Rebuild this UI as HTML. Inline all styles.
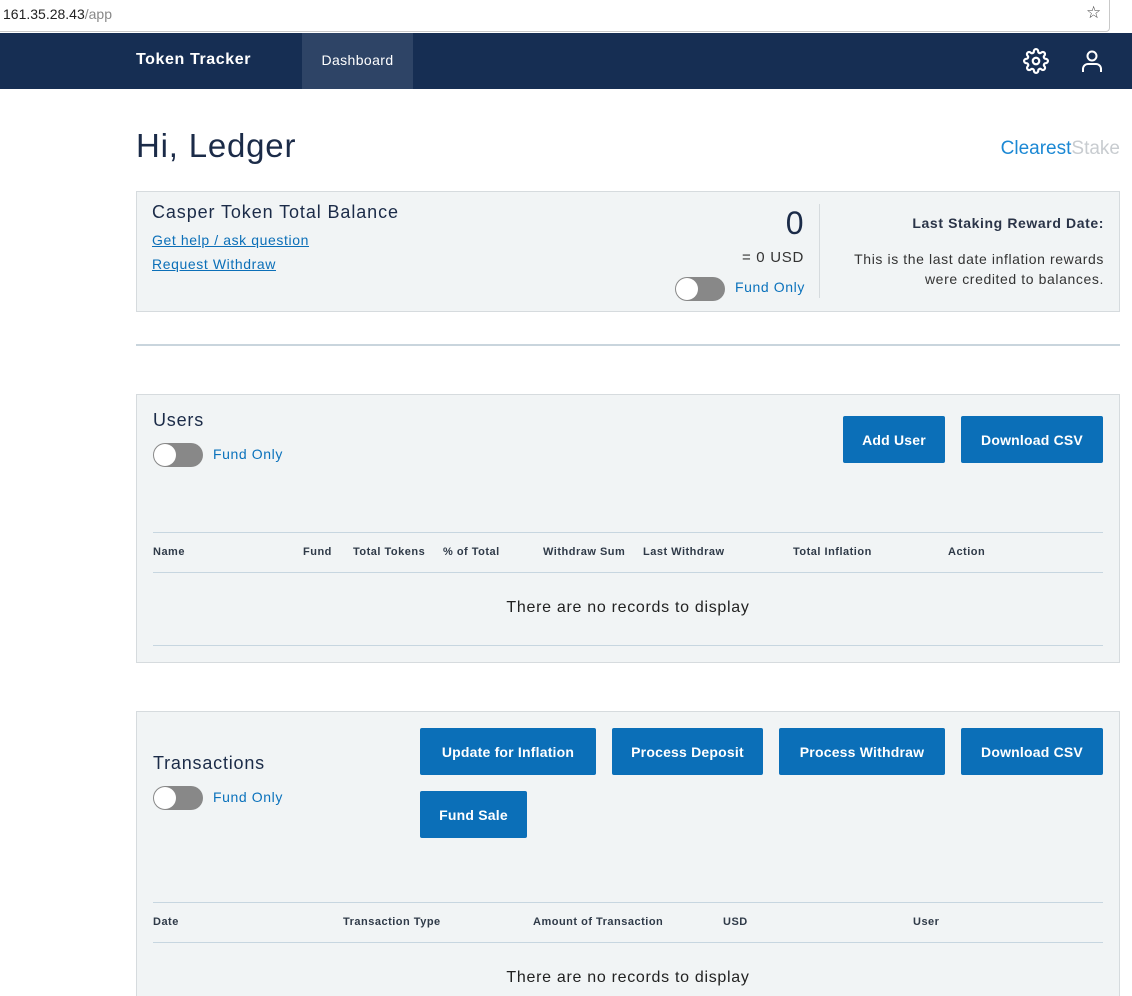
<!DOCTYPE html>
<html><head><meta charset="utf-8"><style>
*{box-sizing:border-box;margin:0;padding:0}
html,body{width:1132px;height:996px;overflow:hidden}
body{background:#fff;font-family:"Liberation Sans",sans-serif;color:#1b2b48;position:relative;letter-spacing:0.4px}
.a{position:absolute;white-space:nowrap}
.bar{left:-5px;top:-5px;width:1115px;height:37px;background:#fff;border:1px solid #c9c9c9;border-radius:4px}
.nav{left:0;top:33px;width:1132px;height:56px;background:#162e53}
.card{background:#f1f4f5;border:1px solid #d6dbde}
.btn{background:#0b6fb8;color:#fff;font-weight:bold;font-size:14px;display:flex;align-items:center;justify-content:center;border-radius:2px;letter-spacing:0.2px}
.lnk{color:#0b6fb8;font-size:14px;text-decoration:underline;letter-spacing:0.6px}
.tog{width:50px;height:24px;border-radius:12px;background:#888}
.tog:after{content:"";position:absolute;left:1px;top:1px;width:22px;height:22px;border-radius:50%;background:#fff}
.fo{color:#0b72bc;font-size:14px;letter-spacing:0.6px}
.th{font-size:11px;font-weight:bold;color:#2f3a48;letter-spacing:0.5px}
.hl{height:1px;background:#c7d6e0}
.nr{font-size:16px;color:#222;width:950px;text-align:center;letter-spacing:0.7px}
</style></head><body>
<div class="a bar"></div>
<div class="a" style="left:3px;top:6px;font-size:14px;color:#222;letter-spacing:0">161.35.28.43<span style="color:#888">/app</span></div>
<div class="a" style="left:1086px;top:3px;font-size:17px;color:#444">☆</div>
<div class="a nav"></div>
<div class="a" style="left:136px;top:51px;color:#fff;font-weight:bold;font-size:16px;letter-spacing:0.6px">Token Tracker</div>
<div class="a" style="left:302px;top:33px;width:111px;height:56px;background:#2e4466;color:#fff;font-size:14px;text-align:center;line-height:54px">Dashboard</div>
<svg class="a" style="left:1023px;top:48px" width="26" height="26" viewBox="0 0 24 24" fill="none" stroke="#fff" stroke-width="2"><circle cx="12" cy="12" r="3"/><path d="M19.4 15a1.65 1.65 0 0 0 .33 1.82l.06.06a2 2 0 1 1-2.830 2.83l-.06-.06a1.65 1.65 0 0 0-1.82-.33 1.65 1.65 0 0 0-1 1.51V21a2 2 0 1 1-4 0v-.09A1.65 1.65 0 0 0 9 19.4a1.65 1.65 0 0 0-1.82.33l-.06.06a2 2 0 1 1-2.83-2.830l.06-.06A1.65 1.65 0 0 0 4.68 15a1.65 1.65 0 0 0-1.51-1H3a2 2 0 1 1 0-4h.09A1.65 1.650 0 0 0 4.6 9a1.65 1.65 0 0 0-.33-1.82l-.06-.06a2 2 0 1 1 2.83-2.83l.06.06A1.65 1.65 0 0 0 9 4.68 1.65 1.65 0 0 0 10 3.17V3a2 2 0 1 1 4 0v.09a1.65 1.65 0 0 0 1 1.51 1.65 1.65 0 0 0 1.82-.33l.06-.06a2 2 0 1 1 2.83 2.83l-.06.06A1.65 1.65 0 0 0 19.4 9a1.65 1.65 0 0 0 1.51 1H21a2 2 0 1 1 0 4h-.09a1.65 1.65 0 0 0-1.51 1z"/></svg>
<svg class="a" style="left:1080px;top:48px" width="24" height="26" viewBox="0 0 24 26" fill="none" stroke="#fff" stroke-width="2"><circle cx="12" cy="8" r="4.5"/><path d="M3 24v-3a5 5 0 0 1 5-5h8a5 5 0 0 1 5 5v3"/></svg>

<div class="a" style="left:136px;top:127px;font-size:33px;color:#1b2b48;letter-spacing:0.8px">Hi, Ledger</div>
<div class="a" style="left:900px;width:220px;text-align:right;top:138px;font-size:19px;color:#1b88d4;letter-spacing:0px">Clearest<span style="color:#c8ccd0">Stake</span></div>

<div class="a card" style="left:136px;top:191px;width:984px;height:121px"></div>
<div class="a" style="left:152px;top:202px;font-size:18px;letter-spacing:0.9px">Casper Token Total Balance</div>
<div class="a lnk" style="left:152px;top:232px">Get help / ask question</div>
<div class="a lnk" style="left:152px;top:256px">Request Withdraw</div>
<div class="a" style="left:700px;top:205px;width:104px;text-align:right;font-size:32px">0</div>
<div class="a" style="left:700px;top:249px;width:104px;text-align:right;font-size:15px;color:#333;letter-spacing:0.7px">= 0 USD</div>
<div class="a tog" style="left:675px;top:277px"></div>
<div class="a fo" style="left:735px;top:279px">Fund Only</div>
<div class="a" style="left:819px;top:204px;width:1px;height:94px;background:#d6dbde"></div>
<div class="a" style="left:830px;top:215px;width:274px;text-align:right;font-size:14px;font-weight:bold;color:#2a3448;letter-spacing:0.6px">Last Staking Reward Date:</div>
<div class="a" style="left:830px;top:249px;width:274px;text-align:right;font-size:14px;color:#333;line-height:20px;letter-spacing:0.6px;white-space:normal">This is the last date inflation rewards<br>were credited to balances.</div>

<div class="a" style="left:136px;top:344px;width:984px;height:2px;background:#c9d5dd"></div>

<div class="a card" style="left:136px;top:394px;width:984px;height:269px"></div>
<div class="a" style="left:153px;top:410px;font-size:18px;letter-spacing:0.8px">Users</div>
<div class="a tog" style="left:153px;top:443px"></div>
<div class="a fo" style="left:213px;top:446px">Fund Only</div>
<div class="a btn" style="left:843px;top:416px;width:102px;height:47px">Add User</div>
<div class="a btn" style="left:961px;top:416px;width:142px;height:47px">Download CSV</div>
<div class="a hl" style="left:153px;top:532px;width:950px"></div>
<div class="a th" style="left:153px;top:546px">Name</div>
<div class="a th" style="left:303px;top:546px">Fund</div>
<div class="a th" style="left:353px;top:546px">Total Tokens</div>
<div class="a th" style="left:443px;top:546px">% of Total</div>
<div class="a th" style="left:543px;top:546px">Withdraw Sum</div>
<div class="a th" style="left:643px;top:546px">Last Withdraw</div>
<div class="a th" style="left:793px;top:546px">Total Inflation</div>
<div class="a th" style="left:948px;top:546px">Action</div>
<div class="a hl" style="left:153px;top:572px;width:950px"></div>
<div class="a nr" style="left:153px;top:599px">There are no records to display</div>
<div class="a hl" style="left:153px;top:645px;width:950px"></div>

<div class="a card" style="left:136px;top:711px;width:984px;height:300px"></div>
<div class="a" style="left:153px;top:753px;font-size:18px;letter-spacing:0.8px">Transactions</div>
<div class="a tog" style="left:153px;top:786px"></div>
<div class="a fo" style="left:213px;top:789px">Fund Only</div>
<div class="a btn" style="left:420px;top:728px;width:176px;height:47px">Update for Inflation</div>
<div class="a btn" style="left:612px;top:728px;width:151px;height:47px">Process Deposit</div>
<div class="a btn" style="left:779px;top:728px;width:166px;height:47px">Process Withdraw</div>
<div class="a btn" style="left:961px;top:728px;width:142px;height:47px">Download CSV</div>
<div class="a btn" style="left:420px;top:791px;width:107px;height:47px">Fund Sale</div>
<div class="a hl" style="left:153px;top:902px;width:950px"></div>
<div class="a th" style="left:153px;top:916px">Date</div>
<div class="a th" style="left:343px;top:916px">Transaction Type</div>
<div class="a th" style="left:533px;top:916px">Amount of Transaction</div>
<div class="a th" style="left:723px;top:916px">USD</div>
<div class="a th" style="left:913px;top:916px">User</div>
<div class="a hl" style="left:153px;top:942px;width:950px"></div>
<div class="a nr" style="left:153px;top:969px">There are no records to display</div>
</body></html>
